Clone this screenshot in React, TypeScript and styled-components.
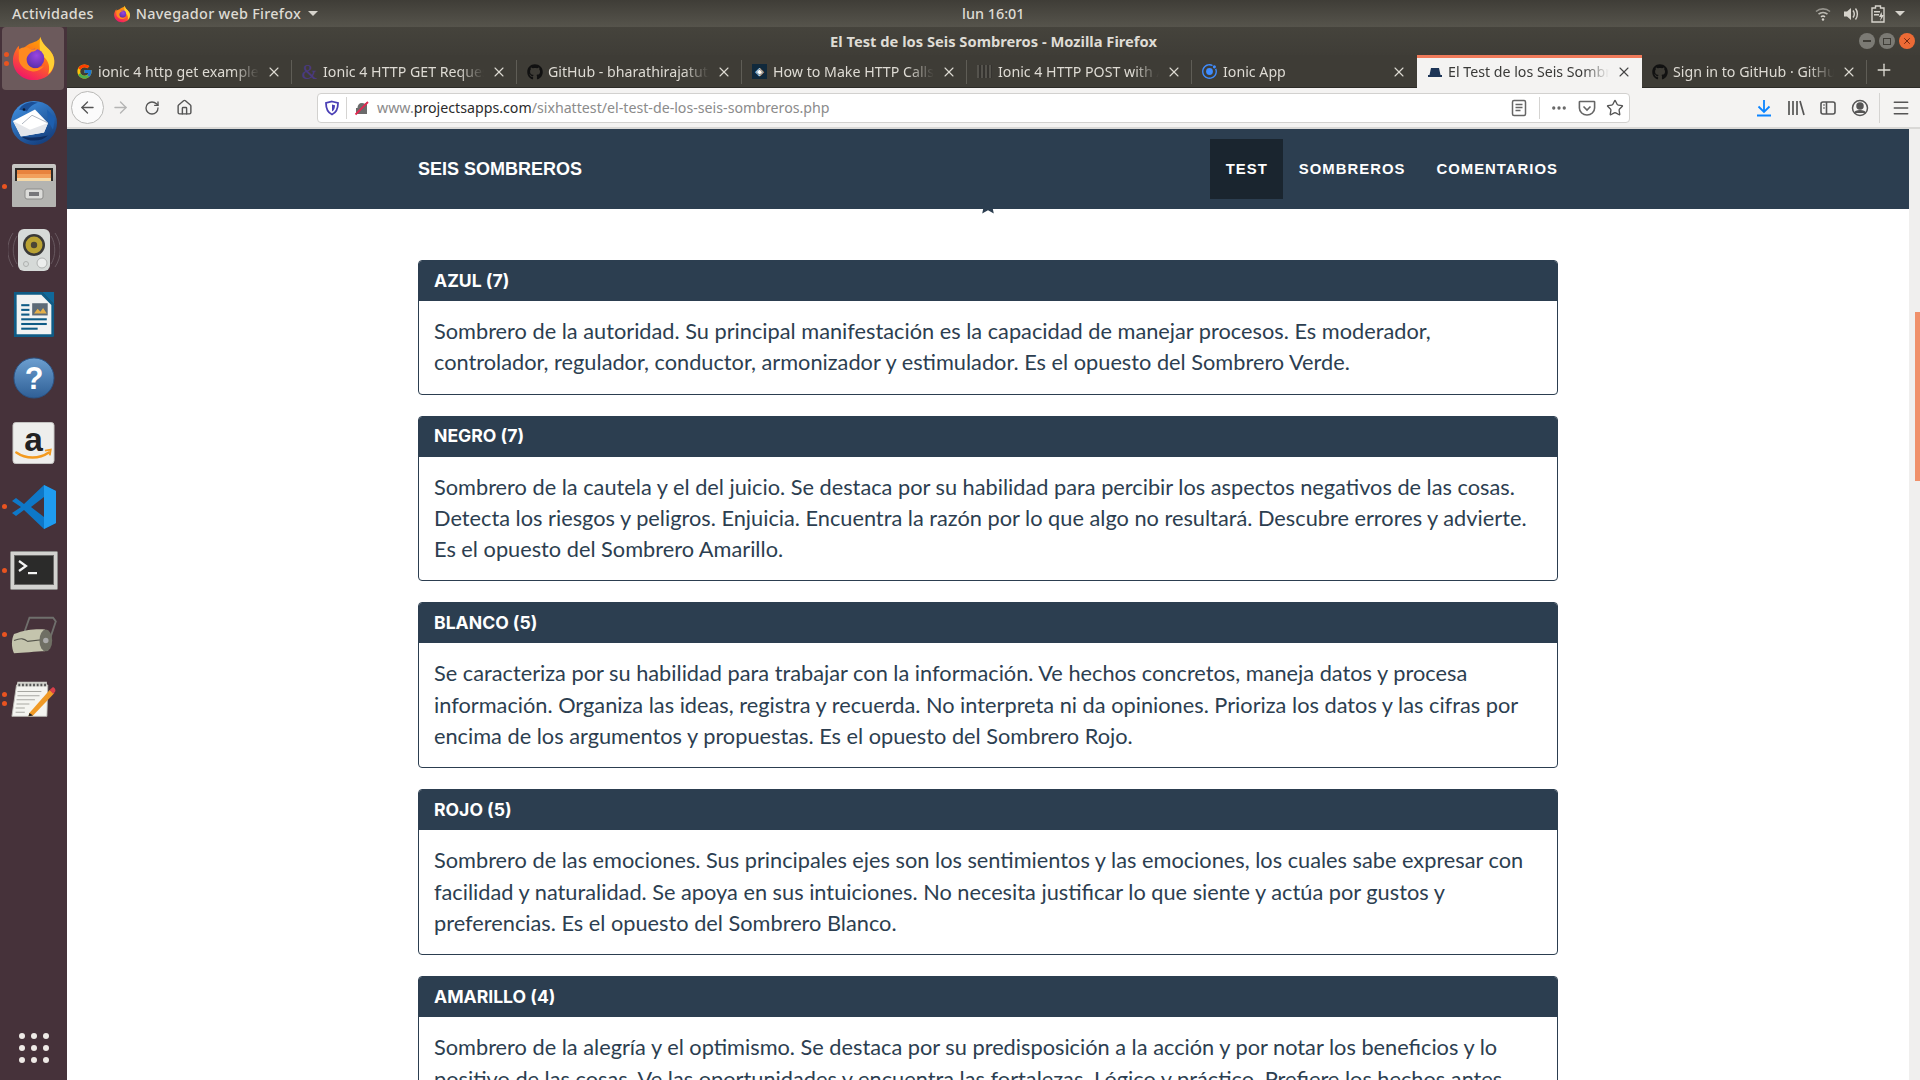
import React from 'react'
import styled, { createGlobalStyle } from 'styled-components'
import { FaGithub } from 'react-icons/fa'
import { FcGoogle } from 'react-icons/fc'
import { IoLogoIonic } from 'react-icons/io5'
import { ArrowLeft, ArrowRight, RotateCw, Home, X, Plus, Menu, MoreHorizontal, Star } from 'lucide-react'

const GlobalStyle = createGlobalStyle`
  html, body { margin: 0; padding: 0; background: #fff; overflow: hidden; }
  * { box-sizing: border-box; }
`

const FirefoxIcon = ({ size }: { size: number }) => (
  <svg width={size} height={size} viewBox="0 0 48 48">
    <defs>
      <linearGradient id="ffBase" x1="0.8" y1="0" x2="0.3" y2="1">
        <stop offset="0" stopColor="#ffb000" />
        <stop offset="0.5" stopColor="#ff6a1f" />
        <stop offset="1" stopColor="#f0146a" />
      </linearGradient>
      <radialGradient id="ffGlobe" cx="0.6" cy="0.35" r="0.8">
        <stop offset="0" stopColor="#9a45e0" />
        <stop offset="1" stopColor="#4a2aa0" />
      </radialGradient>
    </defs>
    <path d="M31 2c1 5 4 8 8 12 5 5 7 10 6 16-1 10-10 16-21 16C12 46 3 37 3 26 3 20 6 14 9 11c0 3 1 5 3 6 1-3 4-6 8-8 5-2 10-3 11-7z" fill="url(#ffBase)" />
    <path d="M31 2c1 5 4 8 8 12 5 5 7 10 6 16-1 4-3 8-6 10 2-6 1-13-4-17-3-3-6-6-4-21z" fill="#ffcf33" />
    <circle cx="25" cy="24" r="10" fill="url(#ffGlobe)" />
    <path d="M9 15c4-3 8-3 11-1 3 1 6 1 9-1-2 3-4 4-7 4-2 2-5 4-5 8 0 5 4 9 9 9 4 0 7-1 9-3-3 5-8 7-13 6-8-1-14-8-13-15 0-3 0-5 0-7z" fill="#ff8a1f" />
  </svg>
)

const ThunderbirdIcon = () => (
  <svg width="50" height="48" viewBox="0 0 50 50" preserveAspectRatio="none">
    <defs>
      <linearGradient id="tbBase" x1="0.2" y1="0" x2="0.8" y2="1">
        <stop offset="0" stopColor="#3f8fe0" />
        <stop offset="1" stopColor="#123a78" />
      </linearGradient>
    </defs>
    <circle cx="25" cy="26" r="23" fill="url(#tbBase)" />
    <path d="M10 12c4-7 13-9 19-7-5 1-9 5-11 9z" fill="#1b4f97" />
    <path d="M4 24 26 12l13 14-4 10-23 4z" fill="#fff" />
    <path d="M4 24l17 9 18-7-4 10-23 4z" fill="#e4e6ea" />
    <path d="M13 27l10-9 16 8" fill="none" stroke="#9aa3b0" strokeWidth="0.8" />
    <path d="M38 12l8 9-2 12-5-9z" fill="#1d5fb0" />
    <path d="M12 40c8 6 20 6 27-1-8 2-16 3-27 1z" fill="#0f2d60" />
    <circle cx="15" cy="12" r="1.3" fill="#0a1a30" />
  </svg>
)

const FilesIcon = () => (
  <svg width="46" height="46" viewBox="0 0 46 46">
    <defs>
      <linearGradient id="cabinet" x1="0" y1="0" x2="0" y2="1">
        <stop offset="0" stopColor="#c9c9c6" />
        <stop offset="1" stopColor="#8f8f8c" />
      </linearGradient>
    </defs>
    <rect x="1" y="1" width="44" height="43" rx="2" fill="url(#cabinet)" />
    <rect x="4" y="5" width="38" height="14" fill="#2c2a28" />
    <rect x="6" y="7" width="34" height="4" fill="#e8833e" />
    <rect x="6" y="11" width="34" height="4" fill="#f2a05c" />
    <rect x="6" y="15" width="34" height="3" fill="#f4d9a8" />
    <rect x="1" y="18" width="44" height="26" rx="1" fill="#b4b4b1" />
    <rect x="14" y="26" width="18" height="10" rx="2" fill="#dcdcd9" stroke="#8c8c8a" />
    <rect x="18" y="29" width="10" height="4" fill="#77777a" />
  </svg>
)

const SpeakerIcon = () => (
  <svg width="52" height="48" viewBox="0 0 52 48">
    <path d="M9 10C4 18 4 30 9 38M43 10c5 8 5 20 0 28M5 7c-7 10-7 24 0 34M47 7c7 10 7 24 0 34" stroke="#67585f" strokeWidth="1" fill="none" />
    <rect x="10" y="3" width="32" height="42" rx="6" fill="#d6dad8" />
    <circle cx="26" cy="19" r="11" fill="#3a3a38" />
    <circle cx="26" cy="19" r="8.5" fill="#b9a233" />
    <circle cx="26" cy="19" r="3.2" fill="#4a4536" />
    <circle cx="34" cy="37" r="5" fill="#eceeed" stroke="#b0b3b1" />
    <circle cx="18" cy="38" r="2.5" fill="none" stroke="#aeb1af" />
  </svg>
)

const WriterIcon = () => (
  <svg width="42" height="47" viewBox="0 0 46 50" preserveAspectRatio="none">
    <path d="M1 1h31l13 13v33a2 2 0 0 1-2 2H1z" fill="#0f5c86" />
    <path d="M4 4h27l11 11v31H4z" fill="#f1f3f3" />
    <path d="M32 1h13v13z" fill="#10699a" />
    <rect x="9" y="14" width="9" height="2.2" fill="#0f5c86" />
    <rect x="9" y="19" width="9" height="2.2" fill="#0f5c86" />
    <rect x="9" y="24" width="9" height="2.2" fill="#0f5c86" />
    <rect x="9" y="29" width="28" height="2.2" fill="#0f5c86" />
    <rect x="9" y="34" width="28" height="2.2" fill="#0f5c86" />
    <rect x="9" y="39" width="18" height="2.2" fill="#0f5c86" />
    <rect x="21" y="13" width="17" height="13" fill="#5d6b78" />
    <path d="M23 24l4-5 3 3 3-4 4 6z" fill="#e5b04a" />
  </svg>
)

const HelpIcon = () => (
  <svg width="42" height="42" viewBox="0 0 44 44">
    <defs>
      <linearGradient id="helpBase" x1="0" y1="0" x2="0" y2="1">
        <stop offset="0" stopColor="#6c9fd0" />
        <stop offset="1" stopColor="#2f5f96" />
      </linearGradient>
    </defs>
    <circle cx="22" cy="22" r="21" fill="url(#helpBase)" stroke="#2a5283" />
    <text x="22" y="33" textAnchor="middle" fontFamily="'Liberation Sans', sans-serif" fontWeight="700" fontSize="32" fill="#fff">?</text>
  </svg>
)

const AmazonIcon = () => (
  <svg width="43" height="42" viewBox="0 0 44 44">
    <rect x="0.5" y="0.5" width="43" height="43" rx="3" fill="#eeeeec" stroke="#c6c6c4" />
    <text x="22" y="30" textAnchor="middle" fontFamily="'Liberation Sans', sans-serif" fontWeight="700" fontSize="35" fill="#222">a</text>
    <path d="M4 32c10 7 24 7 34 0" fill="none" stroke="#f39a1f" strokeWidth="2.6" strokeLinecap="round" />
    <path d="M34 30l6-1-1 6" fill="none" stroke="#f39a1f" strokeWidth="2" />
  </svg>
)

const VsCodeIcon = () => (
  <svg width="46" height="46" viewBox="0 0 46 46">
    <path d="M33 1 45 7v32l-12 6-20-19-8 6-4-3 9-6-9-6 4-3 8 6z" fill="#0e78c8" />
    <path d="M33 1 45 7v32l-12 6z" fill="#1f9cf0" />
    <path d="M33 13 20 23l13 10z" fill="#46323a" />
  </svg>
)

const TerminalIcon = () => (
  <svg width="48" height="39" viewBox="0 0 48 39">
    <rect x="0.5" y="0.5" width="47" height="38" rx="1" fill="#d2d2cf" stroke="#8c8c8a" />
    <rect x="4" y="4" width="40" height="30" fill="#6a6a68" />
    <rect x="5" y="5" width="38" height="28" fill="#2b2b2a" />
    <path d="M9 10l7 5-7 5" fill="none" stroke="#f4f4f4" strokeWidth="2.2" />
    <rect x="18" y="21" width="9" height="2.2" fill="#f4f4f4" />
  </svg>
)

const ScannerIcon = () => (
  <svg width="46" height="40" viewBox="0 0 50 44">
    <path d="M14 20 20 3h26l3 4-8 24" fill="none" stroke="#6f6f6c" strokeWidth="2" />
    <path d="M3 21c12-5 26-6 34-5v24c-10 0-24 2-34 2-3-6-3-15 0-21z" fill="#c4c4ad" />
    <path d="M3 28c8-3 11-2 15 1l18-2" fill="none" stroke="#55554c" strokeWidth="1.2" />
    <ellipse cx="38" cy="28" rx="7" ry="12" fill="#6f6f64" />
    <circle cx="38" cy="28" r="3" fill="#aaa" />
  </svg>
)

const NotepadIcon = () => (
  <svg width="46" height="38" viewBox="0 0 50 46" preserveAspectRatio="none">
    <path d="M6 6h34l-1 38H1z" fill="#f4f4f0" stroke="#bdbdb8" />
    <path d="M7 2h32v6H6z" fill="#d0d0ca" />
    <path d="M8 6h30" stroke="#555" strokeWidth="3" strokeDasharray="2 2" />
    <path d="M7 14h26M7 19h24M6 24h20M6 29h14M5 34h10M5 39h10" stroke="#a7a7a2" strokeWidth="1.2" />
    <path d="M20 40 42 12l5 4-23 27-5 1z" fill="#f09a26" />
    <path d="M42 12l3-3c2-1 4 3 3 5l-2 3z" fill="#d9404a" />
    <path d="M19 44l1-4 4 3z" fill="#222" />
  </svg>
)

const HatIcon = () => (
  <svg width="16" height="16" viewBox="0 0 16 16">
    <path d="M4 4h8l1.500 7H15v2H1v-2h1.500z" fill="#1d3557" />
  </svg>
)

const WifiIcon = () => (
  <svg width="16" height="16" viewBox="0 0 16 16" fill="none" stroke="#d6d3cc" strokeWidth="1.6">
    <path d="M1 5.500c4-3.500 10-3.500 14 0" opacity="0.55" />
    <path d="M3.500 8.200c2.600-2.200 6.400-2.200 9 0" opacity="0.8" />
    <path d="M6 10.800c1.200-.9 2.800-.9 4 0" />
    <circle cx="8" cy="13.500" r="1.200" fill="#d6d3cc" stroke="none" />
  </svg>
)

const VolumeIcon = () => (
  <svg width="16" height="16" viewBox="0 0 16 16">
    <path d="M1 5.500h3L8 2v12l-4-3.500H1z" fill="#d6d3cc" />
    <path d="M10 4.500c1.500 2 1.500 5 0 7M12.500 2.500c2.500 3 2.500 8 0 11" fill="none" stroke="#d6d3cc" strokeWidth="1.400" />
  </svg>
)

const BatteryIcon = () => (
  <svg width="14" height="18" viewBox="0 0 14 18">
    <path d="M4.500 1h5v2H13v14H1V3h3.500z" fill="none" stroke="#d6d3cc" strokeWidth="1.400" />
    <rect x="3" y="6" width="6" height="1.500" fill="#d6d3cc" />
    <rect x="3" y="9" width="5" height="1.500" fill="#d6d3cc" />
    <path d="M10.500 7 8 12h2l-1 4 4-6h-2z" fill="#d6d3cc" />
  </svg>
)

const ShieldIcon = () => (
  <svg width="16" height="16" viewBox="0 0 16 16">
    <path d="M8 1.500 14 3c0 6-1.500 9.500-6 11.500C3.500 12.500 2 9 2 3z" fill="none" stroke="#4a3fb5" strokeWidth="1.800" />
    <path d="M8 4.500 11 5.300c0 3-.8 5-3 6.200z" fill="#4a3fb5" />
  </svg>
)

const InsecureLockIcon = () => (
  <svg width="16" height="16" viewBox="0 0 16 16">
    <path d="M2 14V8h1.500c0-3 1.500-5 4.500-5 1 0 2 .3 2.700.8L13 2v12z" fill="#6b6b6b" />
    <path d="M1.500 14.500 14 2" stroke="#e22850" strokeWidth="1.800" />
  </svg>
)

const ReaderIcon = () => (
  <svg width="16" height="18" viewBox="0 0 16 18" fill="none" stroke="#666" strokeWidth="1.500">
    <rect x="1.500" y="1.500" width="13" height="15" rx="1.500" />
    <path d="M4.500 5.500h7M4.500 8.500h7M4.500 11.500h5" />
  </svg>
)

const PocketIcon = () => (
  <svg width="18" height="18" viewBox="0 0 18 18" fill="none" stroke="#666" strokeWidth="1.600">
    <path d="M2 2.500h14a.6.600 0 0 1 .6.600V9c0 4-3.500 7-7.600 7S1.400 13 1.400 9V3.100a.6.600 0 0 1 .6-.6z" />
    <path d="M5.500 7.500 9 11l3.500-3.500" />
  </svg>
)

const DownloadIcon = () => (
  <svg width="16" height="18" viewBox="0 0 16 18" fill="none" stroke="#0a84ff" strokeWidth="1.800">
    <path d="M8 1v11M2.500 7.500 8 13l5.500-5.500M1 16.500h14" />
  </svg>
)

const LibraryIcon = () => (
  <svg width="18" height="16" viewBox="0 0 18 16" fill="none" stroke="#555" strokeWidth="1.700">
    <path d="M2 1v14M6 1v14M10 1v14M13 1l4 14" />
  </svg>
)

const SidebarIcon = () => (
  <svg width="16" height="16" viewBox="0 0 16 16" fill="none" stroke="#555" strokeWidth="1.600">
    <rect x="1" y="2" width="14" height="12" rx="2" />
    <path d="M6.500 2v12" />
    <path d="M3 5h2M3 8h2" strokeWidth="1.200" />
  </svg>
)

const AccountIcon = () => (
  <svg width="18" height="18" viewBox="0 0 18 18" fill="none" stroke="#555" strokeWidth="1.500">
    <circle cx="9" cy="9" r="7.500" />
    <circle cx="9" cy="7" r="3" fill="#555" />
    <path d="M3.800 14c1-3 9.400-3 10.400 0" fill="#555" />
  </svg>
)

const StarMark = () => (
  <svg width="20" height="20" viewBox="0 0 20 20">
    <path d="M10 1l2.800 6 6.400.7-4.800 4.300 1.400 6.500L10 15.200 4.200 18.500 5.600 12 .8 7.700 7.200 7z" fill="#2c3e50" />
  </svg>
)

const hats = [
  {
    title: 'AZUL (7)',
    text: 'Sombrero de la autoridad. Su principal manifestación es la capacidad de manejar procesos. Es moderador, controlador, regulador, conductor, armonizador y estimulador. Es el opuesto del Sombrero Verde.',
  },
  {
    title: 'NEGRO (7)',
    text: 'Sombrero de la cautela y el del juicio. Se destaca por su habilidad para percibir los aspectos negativos de las cosas. Detecta los riesgos y peligros. Enjuicia. Encuentra la razón por lo que algo no resultará. Descubre errores y advierte. Es el opuesto del Sombrero Amarillo.',
  },
  {
    title: 'BLANCO (5)',
    text: 'Se caracteriza por su habilidad para trabajar con la información. Ve hechos concretos, maneja datos y procesa información. Organiza las ideas, registra y recuerda. No interpreta ni da opiniones. Prioriza los datos y las cifras por encima de los argumentos y propuestas. Es el opuesto del Sombrero Rojo.',
  },
  {
    title: 'ROJO (5)',
    text: 'Sombrero de las emociones. Sus principales ejes son los sentimientos y las emociones, los cuales sabe expresar con facilidad y naturalidad. Se apoya en sus intuiciones. No necesita justificar lo que siente y actúa por gustos y preferencias. Es el opuesto del Sombrero Blanco.',
  },
  {
    title: 'AMARILLO (4)',
    text: 'Sombrero de la alegría y el optimismo. Se destaca por su predisposición a la acción y por notar los beneficios y lo positivo de las cosas. Ve las oportunidades y encuentra las fortalezas. Lógico y práctico. Prefiere los hechos antes',
  },
]

const App: React.FC = () => {
  const tabs = [
    { title: 'ionic 4 http get example', icon: <FcGoogle size={17} /> },
    { title: 'Ionic 4 HTTP GET Request', icon: <AmpIcon>&amp;</AmpIcon> },
    { title: 'GitHub - bharathirajatut/ionic', icon: <FaGithub size={16} color="#111" /> },
    { title: 'How to Make HTTP Calls in', icon: <SquareFav>◈</SquareFav> },
    { title: 'Ionic 4 HTTP POST with Angular', icon: <FilmFav /> },
    { title: 'Ionic App', icon: <IoLogoIonic size={17} color="#3f8cff" /> },
    { title: 'El Test de los Seis Sombreros', icon: <HatIcon />, active: true },
    { title: 'Sign in to GitHub · GitHub', icon: <FaGithub size={16} color="#111" /> },
  ]

  const dockApps = [
    { icon: <FirefoxIcon size={47} />, running: 2, active: true },
    { icon: <ThunderbirdIcon />, running: 0 },
    { icon: <FilesIcon />, running: 1 },
    { icon: <SpeakerIcon />, running: 0 },
    { icon: <WriterIcon />, running: 0 },
    { icon: <HelpIcon />, running: 0 },
    { icon: <AmazonIcon />, running: 0 },
    { icon: <VsCodeIcon />, running: 1 },
    { icon: <TerminalIcon />, running: 1 },
    { icon: <ScannerIcon />, running: 1 },
    { icon: <NotepadIcon />, running: 2 },
  ]

  return (
    <Desktop>
      <GlobalStyle />
      <TopPanel>
        <PanelLeft>
          <PanelLabel>Actividades</PanelLabel>
          <PanelApp>
            <FirefoxIcon size={18} />
            <PanelLabel>Navegador web Firefox</PanelLabel>
            <Caret />
          </PanelApp>
        </PanelLeft>
        <PanelLabel>lun 16:01</PanelLabel>
        <PanelRight>
          <WifiIcon />
          <VolumeIcon />
          <BatteryIcon />
          <Caret />
        </PanelRight>
      </TopPanel>
      <Workspace>
        <Dock>
          {dockApps.map((app, i) => (
            <DockItem key={i} $active={app.active}>
              {app.running > 0 && (
                <RunningDots>
                  {Array.from({ length: app.running }).map((_, j) => (
                    <RunningDot key={j} />
                  ))}
                </RunningDots>
              )}
              {app.icon}
            </DockItem>
          ))}
          <AppGrid>
            {Array.from({ length: 9 }).map((_, i) => (
              <AppGridDot key={i} />
            ))}
          </AppGrid>
        </Dock>
        <Browser>
          <TitleBar>
            <span />
            <WindowTitle>El Test de los Seis Sombreros - Mozilla Firefox</WindowTitle>
            <WindowButtons>
              <WindowButton><MinusMark /></WindowButton>
              <WindowButton><SquareMark /></WindowButton>
              <WindowButton $close><X size={10} strokeWidth={2} color="#5a1a08" /></WindowButton>
            </WindowButtons>
          </TitleBar>
          <TabStrip>
            {tabs.map((tab, i) => (
              <Tab key={i} $active={tab.active} $noDivider={tab.active || tabs[i + 1]?.active}>
                <TabIcon>{tab.icon}</TabIcon>
                <TabTitle $active={tab.active}>{tab.title}</TabTitle>
                <X size={16} strokeWidth={1.6} color={tab.active ? '#444' : '#dedbd4'} />
              </Tab>
            ))}
            <NewTab>
              <Plus size={20} strokeWidth={1.6} color="#dedbd4" />
            </NewTab>
          </TabStrip>
          <Toolbar>
            <NavButtons>
              <BackButton><ArrowLeft size={19} strokeWidth={1.7} color="#555" /></BackButton>
              <ToolSlot><ArrowRight size={19} strokeWidth={1.7} color="#b4b4b4" /></ToolSlot>
              <ToolSlot><RotateCw size={16} strokeWidth={2} color="#555" /></ToolSlot>
              <ToolSlot><Home size={17} strokeWidth={2} color="#555" /></ToolSlot>
            </NavButtons>
            <UrlBar>
              <UrlSlot><ShieldIcon /></UrlSlot>
              <UrlSeparator />
              <LockSlot><InsecureLockIcon /></LockSlot>
              <UrlText>
                www.<UrlDomain>projectsapps.com</UrlDomain>/sixhattest/el-test-de-los-seis-sombreros.php
              </UrlText>
              <UrlActions>
                <ReaderSlot><ReaderIcon /></ReaderSlot>
                <UrlSeparator />
                <DotsSlot><MoreHorizontal size={18} strokeWidth={2.4} color="#666" /></DotsSlot>
                <UrlSlot><PocketIcon /></UrlSlot>
                <UrlSlot><Star size={18} strokeWidth={1.8} color="#555" /></UrlSlot>
              </UrlActions>
            </UrlBar>
            <ToolsRight>
              <ToolSlot><DownloadIcon /></ToolSlot>
              <ToolSlot><LibraryIcon /></ToolSlot>
              <ToolSlot><SidebarIcon /></ToolSlot>
              <ToolSlot><AccountIcon /></ToolSlot>
              <ToolSeparator />
              <ToolSlot><Menu size={20} strokeWidth={1.8} color="#555" /></ToolSlot>
            </ToolsRight>
          </Toolbar>
          <PageFrame>
            <Page>
              <NavBar>
                <NavInner>
                  <Brand>SEIS SOMBREROS</Brand>
                  <NavLinks>
                    <NavLink $active>TEST</NavLink>
                    <NavLink>SOMBREROS</NavLink>
                    <NavLink>COMENTARIOS</NavLink>
                  </NavLinks>
                </NavInner>
              </NavBar>
              <DividerStar><StarMark /></DividerStar>
              <Cards>
                {hats.map(hat => (
                  <Card key={hat.title}>
                    <CardHeader>{hat.title}</CardHeader>
                    <CardBody>{hat.text}</CardBody>
                  </Card>
                ))}
              </Cards>
            </Page>
            <ScrollTrack>
              <ScrollThumb />
            </ScrollTrack>
          </PageFrame>
        </Browser>
      </Workspace>
    </Desktop>
  )
}

const Desktop = styled.div`
  width: 1920px;
  height: 1080px;
  overflow: hidden;
  display: flex;
  flex-direction: column;
  background: #fff;
`

const TopPanel = styled.div`
  height: 27px;
  flex: none;
  display: grid;
  grid-template-columns: 962px auto 1fr;
  align-items: center;
  background: linear-gradient(#3f3d37, #56544c);
  color: #dedbd4;
`

const PanelLeft = styled.div`
  display: flex;
  align-items: center;
  gap: 19px;
  padding-left: 12px;
  letter-spacing: 0.28px;
`

const PanelApp = styled.div`
  display: flex;
  align-items: center;
  gap: 5px;
`

const PanelRight = styled.div`
  display: flex;
  align-items: center;
  justify-content: flex-end;
  gap: 12px;
  padding-right: 15px;

  & > svg:last-of-type {
    margin-right: -4px;
  }
`

const PanelLabel = styled.span`
  font-family: 'Noto Sans', sans-serif;
  font-size: 14.4px;
  font-weight: 500;
  white-space: nowrap;
`

const Caret = styled.span`
  width: 0;
  height: 0;
  margin-left: 2px;
  border-left: 5px solid transparent;
  border-right: 5px solid transparent;
  border-top: 5px solid #d6d3cc;
`

const Workspace = styled.div`
  flex: 1;
  min-height: 0;
  display: flex;
`

const Dock = styled.div`
  width: 67px;
  flex: none;
  display: flex;
  flex-direction: column;
  background: #46323a;
`

const DockItem = styled.div<{ $active?: boolean }>`
  position: relative;
  height: ${p => (p.$active ? '63px' : '64.1px')};
  flex: none;
  display: flex;
  align-items: center;
  justify-content: center;
  margin: ${p => (p.$active ? '0 3px 0 2px' : '0')};
  border-radius: ${p => (p.$active ? '4px' : '0')};
  background: ${p => (p.$active ? '#6c5a5c' : 'transparent')};
`

const RunningDots = styled.div`
  position: absolute;
  left: 2px;
  top: 0;
  bottom: 0;
  display: flex;
  flex-direction: column;
  justify-content: center;
  gap: 4px;
`

const RunningDot = styled.span`
  width: 5px;
  height: 5px;
  border-radius: 50%;
  background: #e95420;
`

const AppGrid = styled.div`
  margin-top: auto;
  height: 64px;
  display: grid;
  grid-template-columns: repeat(3, 6px);
  grid-auto-rows: 6px;
  gap: 6px;
  align-content: center;
  justify-content: center;
`

const AppGridDot = styled.span`
  border-radius: 50%;
  background: #eeeae6;
`

const Browser = styled.div`
  flex: 1;
  min-width: 0;
  display: flex;
  flex-direction: column;
`

const TitleBar = styled.div`
  height: 28px;
  flex: none;
  display: grid;
  grid-template-columns: 1fr auto 1fr;
  align-items: center;
  background: linear-gradient(#45433c, #3f3d37);
`

const WindowTitle = styled.span`
  font-family: 'Noto Sans', sans-serif;
  font-size: 14.7px;
  font-weight: 700;
  color: #dfdcd5;
  white-space: nowrap;
`

const WindowButtons = styled.div`
  display: flex;
  justify-content: flex-end;
  gap: 4px;
  padding-right: 5px;
`

const WindowButton = styled.span<{ $close?: boolean }>`
  width: 16px;
  height: 16px;
  border-radius: 50%;
  display: flex;
  align-items: center;
  justify-content: center;
  background: ${p => (p.$close ? '#ed6a35' : '#7b7a74')};
`

const MinusMark = styled.span`
  width: 8px;
  height: 2px;
  background: #3f3d37;
`

const SquareMark = styled.span`
  width: 8px;
  height: 7px;
  border: 1px solid #3f3d37;
`

const TabStrip = styled.div`
  height: 33px;
  flex: none;
  display: flex;
  background: #3e3c36;
  border-bottom: 1px solid #2c2b27;
`

const Tab = styled.div<{ $active?: boolean; $noDivider?: boolean }>`
  position: relative;
  width: 225px;
  flex: none;
  display: flex;
  align-items: center;
  padding: ${p => (p.$active ? '0 10px 3px 9px' : '0 10px 2px 9px')};
  background: ${p => (p.$active ? '#f4f3f2' : 'transparent')};
  border-top: ${p => (p.$active ? '3px solid #f07a5a' : '3px solid transparent')};
  margin-bottom: ${p => (p.$active ? '-1px' : '0')};

  &::after {
    content: '';
    display: ${p => (p.$noDivider ? 'none' : 'block')};
    position: absolute;
    right: 0;
    top: 2px;
    bottom: 3px;
    width: 1px;
    background: #5f5d56;
  }
`

const TabIcon = styled.span`
  width: 17px;
  height: 17px;
  flex: none;
  display: flex;
  align-items: center;
  justify-content: center;
  margin-right: 5px;
`

const TabTitle = styled.span<{ $active?: boolean }>`
  flex: 1;
  min-width: 0;
  margin-right: 7px;
  overflow: hidden;
  white-space: nowrap;
  font-family: 'Noto Sans', sans-serif;
  font-size: 14.2px;
  color: ${p => (p.$active ? '#3a3a38' : '#dedbd4')};
  mask-image: linear-gradient(to right, #000 84%, transparent 100%);
`

const AmpIcon = styled.span`
  font-family: 'Liberation Serif', serif;
  font-size: 20px;
  line-height: 1;
  color: #4b3a80;
`

const SquareFav = styled.span`
  width: 15px;
  height: 15px;
  display: flex;
  align-items: center;
  justify-content: center;
  font-family: 'DejaVu Sans', sans-serif;
  font-size: 11px;
  line-height: 1;
  color: #fff;
  background: #10293c;
`

const FilmFav = styled.span`
  width: 15px;
  height: 13px;
  background: repeating-linear-gradient(90deg, #55534d 0 2px, #35332f 2px 4px);
`

const NewTab = styled.div`
  flex: 1;
  display: flex;
  align-items: center;
  padding: 0 0 2px 7px;
`

const Toolbar = styled.div`
  height: 41px;
  flex: none;
  display: flex;
  align-items: center;
  background: #f4f3f2;
  border-bottom: 2px solid #d9d8d6;
`

const NavButtons = styled.div`
  width: 250px;
  flex: none;
  display: flex;
  align-items: center;
  padding-left: 4px;
`

const BackButton = styled.span`
  width: 33px;
  height: 33px;
  flex: none;
  display: flex;
  align-items: center;
  justify-content: center;
  border: 1px solid #b9b9b7;
  border-radius: 50%;
  background: #fbfbfb;
`

const ToolSlot = styled.span`
  width: 32px;
  height: 32px;
  flex: none;
  display: flex;
  align-items: center;
  justify-content: center;
`

const UrlBar = styled.div`
  width: 1313px;
  height: 30px;
  flex: none;
  display: flex;
  align-items: center;
  background: #fff;
  border: 1px solid #d2d1cf;
  border-radius: 4px;
`

const UrlSlot = styled.span`
  width: 28px;
  height: 28px;
  flex: none;
  display: flex;
  align-items: center;
  justify-content: center;
`

const LockSlot = styled(UrlSlot)`
  width: 26px;
  margin-left: 2px;
`

const ReaderSlot = styled(UrlSlot)`
  margin-right: 6px;
`

const DotsSlot = styled(UrlSlot)`
  margin-left: 5px;
`

const UrlSeparator = styled.span`
  width: 1px;
  height: 22px;
  flex: none;
  background: #d5d4d2;
`

const UrlText = styled.span`
  margin-left: 2px;
  font-family: 'Noto Sans', sans-serif;
  font-size: 14.2px;
  color: #8b8b8b;
  white-space: nowrap;
`

const UrlDomain = styled.span`
  color: #2b2b2b;
`

const UrlActions = styled.div`
  margin-left: auto;
  display: flex;
  align-items: center;
`

const ToolsRight = styled.div`
  flex: none;
  display: flex;
  align-items: center;
  margin-left: 118px;
`

const ToolSeparator = styled.span`
  width: 1px;
  height: 30px;
  margin: 0 5px 0 3px;
  background: #d5d4d2;
`

const PageFrame = styled.div`
  flex: 1;
  min-height: 0;
  display: flex;
`

const Page = styled.div`
  flex: 1;
  min-width: 0;
  overflow: hidden;
  background: #fff;
`

const NavBar = styled.div`
  height: 80px;
  display: flex;
  align-items: center;
  background: #2c3e50;
`

const NavInner = styled.div`
  width: 1140px;
  margin: 0 auto;
  display: flex;
  align-items: center;
  justify-content: space-between;
`

const Brand = styled.span`
  font-family: 'Liberation Sans', sans-serif;
  font-size: 18px;
  font-weight: 700;
  color: #fff;
`

const NavLinks = styled.div`
  display: flex;
  align-items: center;
`

const NavLink = styled.span<{ $active?: boolean }>`
  height: 60px;
  display: flex;
  align-items: center;
  padding: 0 15px 1px 16px;
  font-family: 'Liberation Sans', sans-serif;
  font-size: 14.9px;
  font-weight: 700;
  letter-spacing: 1px;
  color: #fff;
  background: ${p => (p.$active ? '#1a252f' : 'transparent')};

  &:last-child {
    padding-right: 0;
  }
`

const DividerStar = styled.div`
  height: 6px;
  overflow: hidden;
  display: flex;
  justify-content: center;
  align-items: flex-end;
`

const Cards = styled.div`
  width: 1140px;
  margin: 45px auto 0;
  display: flex;
  flex-direction: column;
  gap: 21px;
`

const Card = styled.div`
  border: 1px solid #2c3e50;
  border-radius: 4px;
  overflow: hidden;
`

const CardHeader = styled.div`
  height: 40px;
  display: flex;
  align-items: center;
  padding: 0 15px 2px;
  background: #2c3e50;
  font-family: Inter, sans-serif;
  font-size: 17.6px;
  font-weight: 700;
  color: #fff;
`

const CardBody = styled.div`
  padding: 15px;
  font-family: Lato, sans-serif;
  font-size: 21.76px;
  line-height: 31.3px;
  color: #2c3e50;
`

const ScrollTrack = styled.div`
  width: 11px;
  flex: none;
  position: relative;
  background: #f0efee;
`

const ScrollThumb = styled.div`
  position: absolute;
  right: 0;
  top: 183px;
  width: 5px;
  height: 169px;
  background: #f0906a;
`

export default App
